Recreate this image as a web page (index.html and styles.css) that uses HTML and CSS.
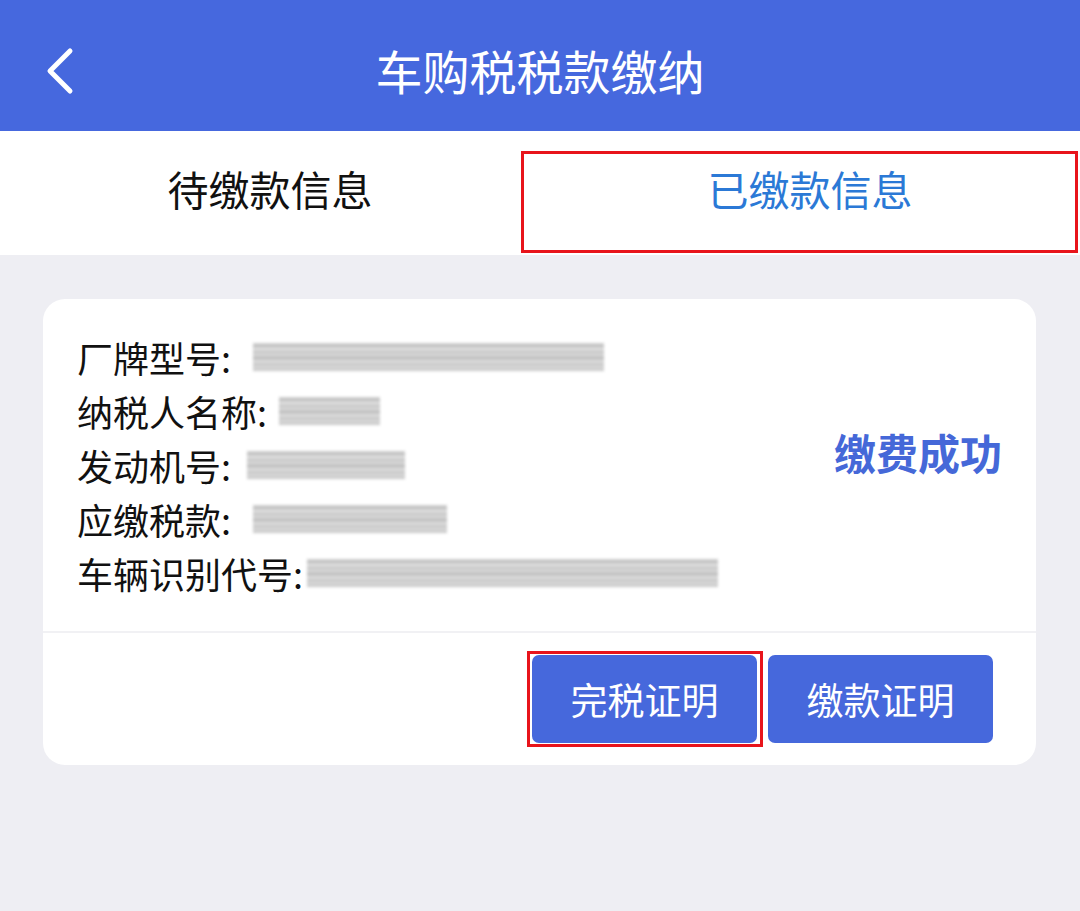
FILE: index.html
```html
<!DOCTYPE html>
<html lang="zh-CN">
<head>
    <meta charset="UTF-8">
    <meta name="viewport" content="width=device-width, initial-scale=1.0">
    <title>车购税税款缴纳</title>
    <link rel="stylesheet" href="styles.css">
</head>
<body>
    <header class="topbar">
        <button class="back" aria-label="返回">
            <svg width="32" height="48" viewBox="0 0 32 48">
                <path d="M26 4 L6 24 L26 44" fill="none" stroke="#fff" stroke-width="5" stroke-linecap="round" stroke-linejoin="round"/>
            </svg>
        </button>
        <h1 class="title">车购税税款缴纳</h1>
    </header>

    <nav class="tabs">
        <div class="tab">待缴款信息</div>
        <div class="tab active">已缴款信息<span class="mark mark-tab"></span></div>
    </nav>

    <main class="page">
        <section class="card">
            <div class="card-body">
                <div class="rows">
                    <div class="row"><span class="label">厂牌型号:</span><span class="masked" style="margin-left:22px;width:351px"></span></div>
                    <div class="row"><span class="label">纳税人名称:</span><span class="masked" style="margin-left:12px;width:101px"></span></div>
                    <div class="row"><span class="label">发动机号:</span><span class="masked" style="margin-left:16px;width:158px"></span></div>
                    <div class="row"><span class="label">应缴税款:</span><span class="masked" style="margin-left:22px;width:194px"></span></div>
                    <div class="row"><span class="label">车辆识别代号:</span><span class="masked" style="margin-left:4px;width:411px"></span></div>
                </div>
                <div class="status">缴费成功</div>
            </div>
            <div class="card-foot">
                <button class="btn">完税证明<span class="mark mark-btn"></span></button>
                <button class="btn">缴款证明</button>
            </div>
        </section>
    </main>
</body>
</html>
```

FILE: styles.css
```css
html {
    background: #eeeef3;
}

body {
    margin: 0;
    width: 1080px;
    min-height: 911px;
    font-family: "Noto Sans CJK SC", "Noto Sans", sans-serif;
    background: #eeeef3;
    color: #111;
}

.topbar {
    position: relative;
    height: 131px;
    background: #4668de;
    display: flex;
    align-items: center;
    justify-content: center;
}

.back {
    position: absolute;
    left: 44px;
    top: 47px;
    background: none;
    border: none;
    padding: 0;
    cursor: pointer;
}

.title {
    margin: 0;
    color: #fff;
    font-size: 47px;
    font-weight: 400;
    line-height: 1;
    padding-top: 8px;
}

.tabs {
    display: flex;
    height: 124px;
    background: #fff;
}

.tab {
    position: relative;
    flex: 1;
    display: flex;
    align-items: center;
    justify-content: center;
    font-size: 41px;
    padding-bottom: 10px;
    color: #111;
}

.tab.active {
    color: #2b79d6;
}

/* red annotation frames */
.mark {
    position: absolute;
    border: 3px solid #e8141b;
    pointer-events: none;
}

.mark-tab {
    left: -19px;
    right: 2px;
    top: 20px;
    bottom: 2px;
}

.mark-btn {
    left: -5px;
    right: -6px;
    top: -4px;
    bottom: -4px;
}

.page {
    padding: 44px 44px 0 43px;
}

.card {
    background: #fff;
    border-radius: 22px;
}

.card-body {
    display: flex;
    align-items: center;
    justify-content: space-between;
    padding: 31px 34px 31px 34px;
    border-bottom: 2px solid #f1f1f4;
}

.rows {
    display: flex;
    flex-direction: column;
}

.row {
    display: flex;
    align-items: center;
    height: 54px;
}

.label {
    font-size: 36px;
    line-height: 54px;
    color: #111;
}

.masked {
    display: inline-block;
    height: 28px;
    background: repeating-linear-gradient(180deg,
        #d6d6d6 0px, #bdbdbd 3px, #e4e4e4 6px, #c4c4c4 9px, #dcdcdc 12px, #b8b8b8 15px,
        #e0e0e0 18px, #c9c9c9 21px, #d8d8d8 25px, #c2c2c2 28px);
    filter: blur(1.4px);
}

.status {
    font-size: 42px;
    font-weight: 700;
    color: #4568d8;
    margin-bottom: 28px;
}

.card-foot {
    display: flex;
    justify-content: flex-end;
    gap: 11px;
    padding: 22px 43px 22px 0;
}

.btn {
    position: relative;
    width: 225px;
    height: 88px;
    border: none;
    border-radius: 7px;
    background: #4668dc;
    color: #fff;
    font-family: "Noto Sans CJK SC", "Noto Sans", sans-serif;
    font-size: 37px;
    cursor: pointer;
    padding: 0;
}
```
